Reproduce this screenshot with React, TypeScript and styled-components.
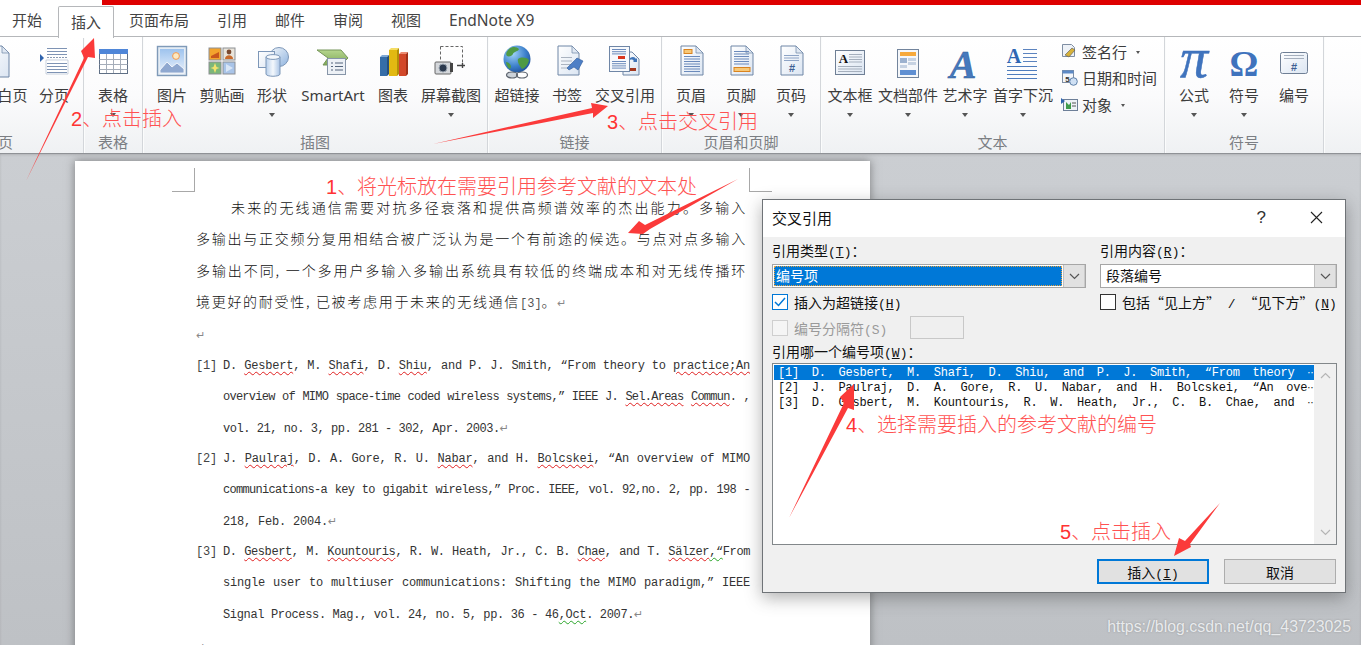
import React from "react";
import styled, { createGlobalStyle } from "styled-components";

const cjk = `"Noto Sans CJK SC", "Noto Sans", sans-serif`;
const mono = `"Liberation Mono", "Noto Sans CJK SC", monospace`;

const Global = createGlobalStyle`
  html, body { margin: 0; padding: 0; background: #c5c8cc; }
  body { font-family: ${cjk}; }
`;

const Screen = styled.div`
  position: relative;
  width: 1361px;
  height: 645px;
  overflow: hidden;
  display: flex;
  flex-direction: column;
  background: #fff;
`;
const HiddenDefs = styled.svg`
  position: absolute;
  width: 0;
  height: 0;
`;
const RedBar = styled.div`
  height: 5px;
  margin-left: 102px;
  background: #de0000;
  flex: none;
`;
const TabRow = styled.nav`
  display: flex;
  height: 31px;
  flex: none;
  position: relative;
  z-index: 2;
`;
const Tab = styled.div<{ $active?: boolean; $first?: boolean; $gap?: boolean }>`
  font-size: 15px;
  line-height: 30px;
  color: #444;
  padding: 0 14px;
  margin-left: ${(p) => (p.$gap ? "1px" : "0")};
  white-space: nowrap;
  ${(p) =>
    p.$first &&
    `padding: 0 15px 0 12px; width: 31px;`}
  ${(p) =>
    p.$active &&
    `height: 31px; margin-top: 1px; line-height: 29px; padding: 0 12px; background: #fff; border: 1px solid #b5b7ba; border-bottom: none; border-radius: 2px 2px 0 0; position: relative;`}
`;
const EnTab = styled(Tab)`
  font-family: "Noto Sans", sans-serif;
  font-size: 15.5px;
`;
const Ribbon = styled.div`
  display: flex;
  height: 116px;
  flex: none;
  border-top: 1px solid #b5b7ba;
  border-bottom: 1px solid #8f9296;
  box-sizing: content-box;
  margin-bottom: -1px;
  background: linear-gradient(#ffffff 0%, #fbfbfc 50%, #eff1f3 100%);
  position: relative;
  z-index: 1;
`;
const Group = styled.section<{ $w: number; $ml?: number; $pl: number }>`
  width: ${(p) => p.$w}px;
  margin-left: ${(p) => p.$ml ?? 0}px;
  flex: none;
  box-sizing: border-box;
  border-right: 1px solid #d3d6da;
  box-shadow: 1px 0 0 #fbfcfc;
  display: flex;
  flex-direction: column;
  padding-left: 0;
  & > div:first-child { padding-left: ${(p) => p.$pl}px; }
`;
const Items = styled.div`
  display: flex;
  height: 92px;
  flex: none;
`;
const GroupLabel = styled.div`
  height: 24px;
  line-height: 25px;
  font-size: 15px;
  color: #7b7e83;
  text-align: center;
`;
const Item = styled.div<{ $w: number }>`
  width: ${(p) => p.$w}px;
  flex: none;
  display: flex;
  flex-direction: column;
  align-items: center;
  padding-top: 5px;
`;
const IconBox = styled.svg`
  width: 40px;
  height: 40px;
  flex: none;
  display: block;
`;
const ItemLabel = styled.div<{ $en?: boolean }>`
  font-size: 15px;
  line-height: 26px;
  height: 26px;
  color: #3c3c3c;
  white-space: nowrap;
  ${(p) => p.$en && `font-family: "Noto Sans", sans-serif;`}
`;
const Caret = styled.span`
  width: 0;
  height: 0;
  margin-top: 5px;
  border-left: 3.5px solid transparent;
  border-right: 3.5px solid transparent;
  border-top: 4px solid #555;
`;
const Stack = styled.div`
  width: 105px;
  flex: none;
  display: flex;
  flex-direction: column;
  padding: 1px 0 0 5px;
  box-sizing: border-box;
`;
const StackRow = styled.div`
  display: flex;
  align-items: center;
  height: 26.5px;
  gap: 4px;
  font-size: 15px;
  color: #3c3c3c;
  white-space: nowrap;
`;
const SmallIcon = styled.svg`
  width: 17px;
  height: 17px;
  flex: none;
`;
const InlineCaret = styled(Caret)`
  margin: 2px 0 0 5px;
  border-left-width: 2.5px;
  border-right-width: 2.5px;
  border-top-width: 3px;
`;

const Workspace = styled.main`
  flex: 1;
  min-height: 0;
  padding: 8px 0 0 75px;
  background: linear-gradient(#cbced2, #bec1c5);
  box-shadow: inset 0 2px 3px -1px rgba(90, 90, 90, 0.45);
`;
const Sheet = styled.article`
  position: relative;
  width: 795px;
  height: 520px;
  box-sizing: border-box;
  padding: 31px 123px 0 121px;
  background: #fff;
  box-shadow: 0 0 9px rgba(70, 70, 70, 0.6);
  color: #222;
  &::before, &::after {
    content: "";
    position: absolute;
    top: 7px;
    width: 22px;
    height: 23px;
    border-bottom: 1px solid #a8a8a8;
  }
  &::before { left: 97px; border-right: 1px solid #a8a8a8; }
  &::after { left: 674px; border-left: 1px solid #a8a8a8; }
`;
const BodyLine = styled.div<{ $indent?: boolean; $last?: boolean; $tall?: boolean }>`
  font-size: 14px;
  font-weight: 300;
  line-height: 31.4px;
  height: ${(p) => (p.$tall ? 33.4 : 31.4)}px;
  letter-spacing: 1.7px;
  white-space: nowrap;
  color: #111;
  text-align: ${(p) => (p.$last ? "left" : "justify")};
  text-align-last: ${(p) => (p.$last ? "left" : "justify")};
  padding-left: ${(p) => (p.$indent ? 35 : 0)}px;
`;
const Mark = styled.span`
  font-family: "DejaVu Sans", sans-serif;
  font-size: 11px;
  color: #888;
  letter-spacing: 0;
`;
const BodyMono = styled.span`
  font-family: ${mono};
  font-size: 12px;
  letter-spacing: 0;
  color: #555;
`;
const RefBlock = styled.div`
  display: flex;
  margin-right: -3px;
`;
const RefMarker = styled.div`
  width: 27px;
  flex: none;
  font-family: ${mono};
  font-size: 12px;
  line-height: 31px;
  letter-spacing: -0.2px;
  color: #444;
`;
const RefLines = styled.div`
  flex: 1;
  min-width: 0;
`;
const RefLine = styled.div<{ $ls?: number; $last?: boolean }>`
  font-family: ${mono};
  font-size: 12px;
  line-height: 31px;
  height: 31px;
  letter-spacing: ${(p) => p.$ls ?? -0.2}px;
  white-space: nowrap;
  color: #333;
  text-align: justify;
  text-align-last: ${(p) => (p.$last ? "left" : "justify")};
`;
const Sq = styled.span<{ $green?: boolean }>`
  text-decoration: underline wavy ${(p) => (p.$green ? "#2aa52a" : "#e02020")} 1px;
  text-underline-offset: 2px;
`;

const Dialog = styled.section`
  position: absolute;
  left: 762px;
  top: 199px;
  width: 584px;
  height: 394px;
  box-sizing: border-box;
  border: 1px solid #6f7377;
  background: #f0f0f0;
  box-shadow: 0 5px 16px rgba(60, 60, 60, 0.4);
  z-index: 3;
  display: flex;
  flex-direction: column;
  color: #111;
`;
const TitleBar = styled.header`
  height: 37px;
  flex: none;
  background: #fff;
  display: flex;
  align-items: center;
  padding: 0 22px 2px 9px;
  font-size: 15px;
  box-sizing: border-box;
`;
const Title = styled.div`
  flex: 1;
`;
const Help = styled.div`
  font-family: "Liberation Sans", sans-serif;
  font-size: 17px;
  margin-right: 44px;
  color: #333;
`;
const CloseSvg = styled.svg`
  width: 13px;
  height: 13px;
`;
const DialogBody = styled.div`
  flex: 1;
  padding: 0 8px 0 9px;
  display: flex;
  flex-direction: column;
`;
const TopGrid = styled.div`
  display: grid;
  grid-template-columns: 314px 237px;
  column-gap: 14px;
`;
const FieldLabel = styled.div<{ $h?: number }>`
  height: ${(p) => p.$h ?? 27}px;
  line-height: ${(p) => p.$h ?? 27}px;
  font-size: 14px;
  white-space: nowrap;
`;
const Hot = styled.span`
  font-family: ${mono};
  font-size: 13px;
  & u { text-underline-offset: 1px; }
`;
const FullWidth = styled.span`
  font-feature-settings: "fwid";
`;
const Combo = styled.div`
  height: 24px;
  display: flex;
  box-sizing: border-box;
  border: 1px solid #a6a6a6;
  background: #fff;
  font-size: 14px;
`;
const ComboValue = styled.div<{ $focus?: boolean }>`
  flex: 1;
  line-height: 18px;
  margin: 1px;
  padding-left: ${(p) => (p.$focus ? 2 : 4)}px;
  box-sizing: border-box;
  ${(p) => p.$focus && `background: #0078d7; color: #fff; outline: 1px dotted #e8a23c; outline-offset: -1px;`}
`;
const ComboButton = styled.div`
  width: 21px;
  flex: none;
  background: #e1e1e1;
  border-left: 1px solid #c0c0c0;
  box-shadow: inset -1px 0 0 #c9c9c9;
  display: flex;
  align-items: center;
  justify-content: center;
`;
const Chevron = styled.svg`
  width: 11px;
  height: 7px;
`;
const CheckRow = styled.label<{ $h?: number; $disabled?: boolean }>`
  display: flex;
  align-items: center;
  gap: 6px;
  height: ${(p) => p.$h ?? 28}px;
  font-size: 14px;
  white-space: nowrap;
  color: ${(p) => (p.$disabled ? "#9a9a9a" : "#111")};
`;
const Box = styled.span<{ $tone: "on" | "off" | "dim" }>`
  width: 16px;
  height: 16px;
  box-sizing: border-box;
  flex: none;
  background: ${(p) => (p.$tone === "dim" ? "#f5f5f5" : "#fff")};
  border: 1px solid ${(p) => (p.$tone === "on" ? "#0078d7" : p.$tone === "off" ? "#333" : "#cfcfcf")};
  display: flex;
  align-items: center;
  justify-content: center;
`;
const SepRow = styled.div`
  display: flex;
  height: 23px;
  align-items: center;
`;
const SepInput = styled.div`
  width: 54px;
  height: 23px;
  box-sizing: border-box;
  border: 1px solid #c8c8c8;
  background: #efefef;
  margin-left: 23px;
`;
const ListBox = styled.div`
  height: 182px;
  flex: none;
  box-sizing: border-box;
  border: 1px solid #82878a;
  background: #fff;
  display: flex;
`;
const ListRows = styled.div`
  flex: 1;
  min-width: 0;
  padding-top: 1px;
`;
const ListRow = styled.div<{ $sel?: boolean }>`
  height: 15px;
  line-height: 16px;
  margin-left: 1px;
  padding-left: 4px;
  font-family: ${mono};
  font-size: 12px;
  letter-spacing: -0.2px;
  word-spacing: 5.7px;
  white-space: pre;
  overflow: hidden;
  background: ${(p) => (p.$sel ? "#0078d7" : "transparent")};
  color: ${(p) => (p.$sel ? "#fff" : "#111")};
`;
const Ell = styled.span`
  font-family: "DejaVu Sans", sans-serif;
  font-size: 10px;
  letter-spacing: 0;
`;
const Scroll = styled.div`
  width: 22px;
  flex: none;
  background: #f0f0f0;
  display: flex;
  flex-direction: column;
  justify-content: space-between;
  align-items: center;
  padding: 8px 0;
  box-sizing: border-box;
`;
const Footer = styled.div`
  display: flex;
  justify-content: flex-end;
  gap: 15px;
  padding: 14px 1px 0 0;
`;
const DlgButton = styled.button<{ $primary?: boolean }>`
  width: 112px;
  height: 25px;
  padding: 0;
  box-sizing: border-box;
  font-family: ${cjk};
  font-size: 14px;
  color: #111;
  background: #e1e1e1;
  border: ${(p) => (p.$primary ? "2px solid #0078d7" : "1px solid #adadad")};
`;

const Overlay = styled.svg`
  position: absolute;
  inset: 0;
  width: 1361px;
  height: 645px;
  z-index: 4;
  pointer-events: none;
`;
const Note = styled.div<{ $x: number; $y: number }>`
  position: absolute;
  left: ${(p) => p.$x}px;
  top: ${(p) => p.$y}px;
  z-index: 5;
  font-size: 20px;
  font-weight: 300;
  line-height: 28px;
  height: 28px;
  color: #ff5252;
  white-space: nowrap;
`;
const NoteNum = styled.span`
  font-family: "Liberation Sans", sans-serif;
  font-weight: 400;
  color: #ff3333;
`;
const Watermark = styled.div`
  position: absolute;
  right: 10px;
  bottom: 9px;
  z-index: 5;
  font-family: "Liberation Sans", sans-serif;
  font-size: 15.9px;
  color: rgba(240, 242, 244, 0.92);
  text-shadow: 0 0 2px rgba(120, 120, 120, 0.6);
`;

const pg = "#6f86a6";
const Page = ({ x = 10, y = 4, w = 22, h = 29 }: { x?: number; y?: number; w?: number; h?: number }) => (
  <path d={`M${x} ${y}h${w - 7}l7 7v${h - 7}h-${w}z`} fill="url(#pageFill)" stroke={pg} />
);
const Fold = ({ x = 10, y = 4, w = 22 }: { x?: number; y?: number; w?: number }) => (
  <path d={`M${x + w - 7} ${y}v7h7z`} fill="#dfe7f2" stroke={pg} strokeWidth=".7" />
);
const Lines = ({ x, y, w, n, d = 2.5, c = "#6b8abb" }: { x: number; y: number; w: number; n: number; d?: number; c?: string }) => (
  <g stroke={c}>
    {Array.from({ length: n }).map((_, i) => (
      <path key={i} d={`M${x} ${y + i * d + 0.5}h${w}`} />
    ))}
  </g>
);

const Icons: Record<string, React.ReactNode> = {
  blank: (<><Page x={0} y={4} w={24} h={31} /><Fold x={0} y={4} w={24} /></>),
  pagebreak: (
    <>
      <path d="M12 4h22v9h-22z" fill="#fff" />
      <Lines x={13} y={6} w={20} n={3} d={3} c="#7e93b4" />
      <path d="M13 15.5h21" stroke="#8a9ab3" strokeDasharray="2 1" />
      <path d="M12 18h22v14h-22z" fill="#fff" stroke="#a9b7cb" strokeWidth=".6" />
      <Lines x={13} y={21} w={20} n={4} d={3} c="#7e93b4" />
      <path d="M6 12l4 4-4 4z" fill="#2f63ad" />
    </>
  ),
  table: (
    <>
      <rect x="6.5" y="7.5" width="28" height="24" fill="#fff" stroke="#5f6f85" />
      <rect x="6" y="7" width="29" height="5" fill="#4f86d8" />
      <path d="M6.5 17.5h28M6.5 22.5h28M6.5 27.5h28M13.5 12v19M20.5 12v19M27.5 12v19" stroke="#a5adb9" />
    </>
  ),
  picture: (
    <>
      <rect x="5.5" y="4.5" width="29" height="29" fill="#e4ecf4" stroke="#7f9ab8" strokeWidth="1.4" />
      <rect x="8" y="7" width="24" height="24" fill="url(#sky)" />
      <circle cx="24" cy="14" r="3.4" fill="#fde9c2" stroke="#f09a52" />
      <path d="M8 28l7-8 5 5 5-4 7 6v4h-24z" fill="#8fa8d0" stroke="#fff" strokeWidth=".8" />
    </>
  ),
  clip: (
    <>
      <rect x="7" y="6" width="12" height="12" fill="#f4a32c" stroke="#8c8f94" />
      <path d="M9 14l8-4v6h-8z" fill="#c9561c" />
      <rect x="21" y="6" width="12" height="12" fill="#e9e4da" stroke="#8c8f94" />
      <circle cx="27" cy="10" r="2.4" fill="#7a4a30" />
      <path d="M23 17c0-5 8-5 8 0z" fill="#c86a2c" />
      <rect x="7" y="20" width="12" height="12" fill="#7cb77a" stroke="#8c8f94" />
      <path d="M13 21l1.5 4 3 1-3 1-1.5 4-1.5-4-3-1 3-1z" fill="#f3e36d" />
      <rect x="21" y="20" width="12" height="12" fill="#a9c4e8" stroke="#8c8f94" />
      <path d="M24 22l7 4-7 4z" fill="#d9e6f6" />
    </>
  ),
  shapes: (
    <>
      <circle cx="27" cy="15" r="9.5" fill="url(#ball)" stroke="#7d97b8" />
      <rect x="6.5" y="9.5" width="16" height="16" fill="url(#pageFill)" stroke="#7d97b8" />
      <path d="M14 15h14v17c0 3-14 3-14 0z" fill="url(#cyl)" stroke="#7d97b8" />
      <ellipse cx="21" cy="15" rx="7" ry="2.4" fill="#f4f8fc" stroke="#7d97b8" />
    </>
  ),
  smart: (
    <>
      <path d="M4 8h24l7 8-7 7h-18l5-7z" fill="url(#green)" stroke="#76965a" />
      <rect x="14.5" y="16.5" width="18" height="16" fill="#edf1f6" stroke="#8795a8" />
      <path d="M18 21h2M22 21h8M18 24.5h2M22 24.5h8M18 28h2M22 28h8" stroke="#55657c" />
    </>
  ),
  chart: (
    <>
      <path d="M7 15h7v19h-7z" fill="#356da8" /><path d="M7 15l2-2h7l-2 2z" fill="#7fa9d6" /><path d="M14 15l2-2v19l-2 2z" fill="#27507c" />
      <path d="M16 8h8v26h-8z" fill="#e2b912" /><path d="M16 8l2-2h8l-2 2z" fill="#f5dd63" /><path d="M24 8l2-2v26l-2 2z" fill="#b39008" />
      <path d="M26 12h7v22h-7z" fill="#d2482a" /><path d="M26 12l2-2h7l-2 2z" fill="#ec8c72" /><path d="M33 12l2-2v22l-2 2z" fill="#9f3119" />
    </>
  ),
  shot: (
    <>
      <path d="M9.5 4.5h22v19" fill="none" stroke="#666" strokeDasharray="3 2" />
      <path d="M9.5 4.5v14" fill="none" stroke="#666" strokeDasharray="3 2" />
      <path d="M26 23.5h5M31.5 21v5M29 23.5h5" stroke="#444" strokeWidth="1.4" />
      <rect x="4" y="20" width="16" height="12" rx="1" fill="#d4d7db" stroke="#666" />
      <circle cx="12" cy="26" r="4" fill="#2c3a4e" stroke="#9aa4b0" />
      <rect x="19" y="21" width="3" height="9" fill="#444" />
    </>
  ),
  globe: (
    <>
      <circle cx="20" cy="17" r="13.5" fill="url(#globe)" />
      <path d="M12 7c4-3 8-2 10 0-1 3-5 2-6 5-1 2-4 3-6 2-2-2 0-5 2-7zM21 17c3-2 8-2 11 1-1 5-4 8-7 9-2-3-5-6-4-10zM9 20c2 0 5 2 5 5l-1 2c-2-1-4-4-4-7z" fill="#4f9a44" />
      <ellipse cx="15" cy="33" rx="5.5" ry="3" fill="#ccd2d9" stroke="#5d646e" strokeWidth="1.2" />
      <ellipse cx="25" cy="33" rx="5.5" ry="3" fill="none" stroke="#5d646e" strokeWidth="1.2" />
    </>
  ),
  book: (
    <>
      <Page x={11} y={4} w={21} h={29} /><Fold x={11} y={4} w={21} />
      <Lines x={14} y={15} w={11} n={4} d={3.5} c="#aab3c0" />
      <path d="M20 26l10-10 6 3-5 9-4-3-5 3z" fill="#4d7fc6" stroke="#2d5a9a" strokeWidth=".6" />
    </>
  ),
  cross: (
    <>
      <Page x={18} y={10} w={16} h={23} />
      <rect x="24" y="26" width="7" height="3" fill="#a4381f" />
      <path d="M25 16c3-2 5-1 6 1l1-1v4h-4l1-1c-1-1-2-2-4-1z" fill="#3f74b8" />
      <rect x="4.5" y="4.5" width="20" height="25" fill="#f7f9fc" stroke={pg} />
      <Lines x={7} y={7} w={14} n={3} d={2.2} c="#6b8abb" />
      <rect x="13" y="14" width="7" height="3" fill="#d9371f" />
      <Lines x={7} y={19} w={14} n={4} d={2.2} c="#6b8abb" />
    </>
  ),
  header: (
    <>
      <Page /><Fold />
      <rect x="13" y="7.5" width="8" height="4" fill="#f7c877" stroke="#d9831f" />
      <Lines x={13} y={14} w={16} n={7} />
    </>
  ),
  footer: (
    <>
      <Page /><Fold />
      <Lines x={13} y={9} w={15} n={6} />
      <rect x="13" y="25.5" width="16" height="4" fill="#f7c877" stroke="#d9831f" />
    </>
  ),
  pagenum: (
    <>
      <Page /><Fold />
      <Lines x={13} y={13} w={15} n={3} d={2.5} c="#8ea4c6" />
      <text x="21" y="30" textAnchor="middle" fontFamily="Liberation Sans" fontWeight="700" fontSize="11" fill="#3d5f93">#</text>
    </>
  ),
  textbox: (
    <>
      <rect x="5.5" y="8.5" width="29" height="24" fill="url(#pageFill)" stroke="#6f7f95" />
      <text x="13.5" y="21" textAnchor="middle" fontFamily="Liberation Serif" fontWeight="700" fontSize="13" fill="#111">A</text>
      <Lines x={19} y={12} w={13} n={4} d={2.5} c="#a5afbd" />
      <Lines x={8} y={24} w={24} n={3} d={2.5} c="#a5afbd" />
    </>
  ),
  parts: (
    <>
      <rect x="9.5" y="7.5" width="21" height="28" fill="#f5f7fa" stroke="#72849c" />
      <rect x="12" y="10" width="16" height="4" fill="#f7a93b" />
      <rect x="12" y="16" width="7" height="5" fill="#9db2cf" />
      <rect x="20" y="16" width="8" height="3" fill="#c6d2e2" />
      <rect x="20" y="20" width="8" height="3" fill="#c6d2e2" />
      <rect x="12" y="23" width="7" height="3" fill="#c6d2e2" />
      <rect x="12" y="28" width="16" height="5" fill="#5f8fd2" />
    </>
  ),
  wordart: (
    <text x="18" y="36" textAnchor="middle" fontFamily="Liberation Serif" fontStyle="italic" fontWeight="700" fontSize="40" fill="#4679bd" stroke="#2f5a97" strokeWidth=".5">A</text>
  ),
  dropcap: (
    <>
      <text x="11" y="21" textAnchor="middle" fontFamily="Liberation Serif" fontWeight="700" fontSize="20" fill="#2f66b3">A</text>
      <Lines x={20} y={7} w={14} n={4} d={4} c="#5c84bf" />
      <Lines x={4} y={24} w={30} n={4} d={4} c="#4f7dbd" />
    </>
  ),
  pi: (
    <text x="20" y="35" textAnchor="middle" fontFamily="Liberation Serif" fontStyle="italic" fontSize="56" fill="#3f73bd" stroke="#3f73bd" strokeWidth=".5">π</text>
  ),
  omega: (
    <text x="20" y="34" textAnchor="middle" fontFamily="Liberation Serif" fontWeight="700" fontSize="36" fill="#3f73bd">Ω</text>
  ),
  number: (
    <>
      <rect x="6.5" y="10.5" width="27" height="21" rx="2" fill="url(#pageFill)" stroke="#6f7f95" />
      <Lines x={10} y={13} w={20} n={2} d={3} c="#a5afbd" />
      <text x="20" y="28.5" textAnchor="middle" fontFamily="Liberation Sans" fontWeight="700" fontSize="11" fill="#3d5f93">#</text>
    </>
  ),
};

type It = { label: string; w: number; icon: string; caret?: boolean; en?: boolean };
type Gr = { name: string; w: number; ml?: number; pl: number; items: It[]; stack?: boolean };

const groups: Gr[] = [
  { name: "分页", w: 171, ml: -87, pl: 67, items: [
    { label: "空白页", w: 50, icon: "blank" },
    { label: "分页", w: 48, icon: "pagebreak" },
  ] },
  { name: "表格", w: 59, pl: 0, items: [{ label: "表格", w: 58, icon: "table", caret: true }] },
  { name: "插图", w: 345, pl: 4, items: [
    { label: "图片", w: 50, icon: "picture" },
    { label: "剪贴画", w: 50, icon: "clip" },
    { label: "形状", w: 50, icon: "shapes", caret: true },
    { label: "SmartArt", w: 72, icon: "smart", en: true },
    { label: "图表", w: 48, icon: "chart" },
    { label: "屏幕截图", w: 68, icon: "shot", caret: true },
  ] },
  { name: "链接", w: 174, pl: 4, items: [
    { label: "超链接", w: 50, icon: "globe" },
    { label: "书签", w: 50, icon: "book" },
    { label: "交叉引用", w: 66, icon: "cross" },
  ] },
  { name: "页眉和页脚", w: 159, pl: 4, items: [
    { label: "页眉", w: 50, icon: "header", caret: true },
    { label: "页脚", w: 50, icon: "footer", caret: true },
    { label: "页码", w: 50, icon: "pagenum", caret: true },
  ] },
  { name: "文本", w: 344, pl: 3, stack: true, items: [
    { label: "文本框", w: 52, icon: "textbox", caret: true },
    { label: "文档部件", w: 64, icon: "parts", caret: true },
    { label: "艺术字", w: 50, icon: "wordart", caret: true },
    { label: "首字下沉", w: 66, icon: "dropcap", caret: true },
  ] },
  { name: "符号", w: 159, pl: 4, items: [
    { label: "公式", w: 50, icon: "pi", caret: true },
    { label: "符号", w: 50, icon: "omega", caret: true },
    { label: "编号", w: 50, icon: "number" },
  ] },
];

const ChevronIcon = ({ up, color = "#555" }: { up?: boolean; color?: string }) => (
  <Chevron viewBox="0 0 11 7">
    <path d={up ? "M1 6l4.5-4.5L10 6" : "M1 1l4.5 4.5L10 1"} fill="none" stroke={color} strokeWidth="1.2" />
  </Chevron>
);

const Ret = () => <Mark>↵</Mark>;

export default function App() {
  return (
    <Screen>
      <Global />
      <HiddenDefs aria-hidden="true">
        <defs>
          <linearGradient id="pageFill" x1="0" y1="0" x2="1" y2="1"><stop offset="0" stopColor="#ffffff" /><stop offset="1" stopColor="#dbe5f2" /></linearGradient>
          <linearGradient id="sky" x1="0" y1="0" x2="0" y2="1"><stop offset="0" stopColor="#9ec3ee" /><stop offset="1" stopColor="#e9f1fb" /></linearGradient>
          <linearGradient id="ball" x1="0" y1="0" x2="1" y2="1"><stop offset="0" stopColor="#f4f8fc" /><stop offset="1" stopColor="#8fb3de" /></linearGradient>
          <linearGradient id="cyl" x1="0" y1="0" x2="1" y2="0"><stop offset="0" stopColor="#b9d0ec" /><stop offset=".5" stopColor="#f4f8fc" /><stop offset="1" stopColor="#a9c4e6" /></linearGradient>
          <linearGradient id="green" x1="0" y1="0" x2="0" y2="1"><stop offset="0" stopColor="#b6d68d" /><stop offset="1" stopColor="#7fa858" /></linearGradient>
          <radialGradient id="globe" cx=".35" cy=".3" r=".8"><stop offset="0" stopColor="#9fd3f5" /><stop offset=".6" stopColor="#3c7fcb" /><stop offset="1" stopColor="#1c4c92" /></radialGradient>
        </defs>
      </HiddenDefs>

      <RedBar />
      <TabRow>
        <Tab $first>开始</Tab>
        <Tab $active>插入</Tab>
        <Tab $gap>页面布局</Tab>
        <Tab>引用</Tab>
        <Tab>邮件</Tab>
        <Tab>审阅</Tab>
        <Tab>视图</Tab>
        <EnTab>EndNote X9</EnTab>
      </TabRow>

      <Ribbon>
        {groups.map((g) => (
          <Group key={g.name} $w={g.w} $ml={g.ml} $pl={g.pl}>
            <Items>
              {g.items.map((it) => (
                <Item key={it.label} $w={it.w}>
                  <IconBox viewBox="0 0 40 40">{Icons[it.icon]}</IconBox>
                  <ItemLabel $en={it.en}>{it.label}</ItemLabel>
                  {it.caret && <Caret />}
                </Item>
              ))}
              {g.stack && (
                <Stack>
                  <StackRow>
                    <SmallIcon viewBox="0 0 17 17">
                      <path d="M1.5 1.5h9l3 3v9h-12z" fill="#eef2f7" stroke="#7f8ea3" />
                      <path d="M4 12l7-7 3 2-6 7z" fill="#d7b23a" stroke="#555" strokeWidth=".6" />
                    </SmallIcon>
                    签名行<InlineCaret />
                  </StackRow>
                  <StackRow>
                    <SmallIcon viewBox="0 0 17 17">
                      <rect x="1.5" y="1.5" width="11" height="12" fill="#f4f7fb" stroke="#7f8ea3" />
                      <rect x="1.5" y="1.5" width="11" height="3" fill="#5d8ac6" />
                      <text x="6.5" y="12.5" textAnchor="middle" fontFamily="Liberation Sans" fontWeight="700" fontSize="8" fill="#333">5</text>
                      <circle cx="12.5" cy="12.5" r="3.8" fill="#cfe0f4" stroke="#5d7fa8" />
                    </SmallIcon>
                    日期和时间
                  </StackRow>
                  <StackRow>
                    <SmallIcon viewBox="0 0 17 17">
                      <rect x="2.5" y="3.5" width="14" height="11" fill="#eef2f7" stroke="#6d7f98" />
                      <path d="M5 13V6l3 3 2-3v7z" fill="#3e9a4a" />
                      <path d="M0 2l4 3-4 3z" fill="#2f63ad" />
                      <path d="M11 7h4M11 10h4" stroke="#555" />
                    </SmallIcon>
                    对象<InlineCaret />
                  </StackRow>
                </Stack>
              )}
            </Items>
            <GroupLabel>{g.name}</GroupLabel>
          </Group>
        ))}
      </Ribbon>

      <Workspace>
        <Sheet>
          <BodyLine $indent>未来的无线通信需要对抗多径衰落和提供高频谱效率的杰出能力。多输入</BodyLine>
          <BodyLine>多输出与正交频分复用相结合被广泛认为是一个有前途的候选。与点对点多输入</BodyLine>
          <BodyLine>多输出不同, 一个多用户多输入多输出系统具有较低的终端成本和对无线传播环</BodyLine>
          <BodyLine $last>境更好的耐受性, 已被考虑用于未来的无线通信<BodyMono>[3]</BodyMono>。<Ret /></BodyLine>
          <BodyLine $last $tall><Ret /></BodyLine>
          <RefBlock>
            <RefMarker>[1]</RefMarker>
            <RefLines>
              <RefLine>D. <Sq>Gesbert</Sq>, M. <Sq>Shafi</Sq>, D. <Sq>Shiu</Sq>, and P. J. Smith, “From theory to <Sq>practice;An</Sq></RefLine>
              <RefLine $ls={-0.75}>overview of MIMO space-time coded wireless systems,” IEEE J. <Sq>Sel.Areas</Sq> <Sq>Commun</Sq>. ,</RefLine>
              <RefLine $last $ls={-0.45}>vol. 21, no. 3, pp. 281 - 302, Apr. 2003.<Ret /></RefLine>
            </RefLines>
          </RefBlock>
          <RefBlock>
            <RefMarker>[2]</RefMarker>
            <RefLines>
              <RefLine>J. <Sq>Paulraj</Sq>, D. A. Gore, R. U. <Sq>Nabar</Sq>, and H. <Sq>Bolcskei</Sq>, “An overview of MIMO</RefLine>
              <RefLine $ls={-0.7}>communications-a key to gigabit wireless,” Proc. IEEE, vol. 92,no. 2, pp. 198 -</RefLine>
              <RefLine $last>218, Feb. 2004.<Ret /></RefLine>
            </RefLines>
          </RefBlock>
          <RefBlock>
            <RefMarker>[3]</RefMarker>
            <RefLines>
              <RefLine $ls={-0.4}>D. <Sq>Gesbert</Sq>, M. <Sq>Kountouris</Sq>, R. W. Heath, Jr., C. B. <Sq>Chae</Sq>, and T. <Sq>Sälzer</Sq><Sq $green>,“</Sq>From</RefLine>
              <RefLine>single user to multiuser communications: Shifting the MIMO paradigm,” IEEE</RefLine>
              <RefLine $last $ls={-0.35}>Signal Process. Mag., vol. 24, no. 5, pp. 36 - 46<Sq $green>,Oct</Sq>. 2007.<Ret /></RefLine>
            </RefLines>
          </RefBlock>
          <BodyLine $last><Ret /></BodyLine>
        </Sheet>
      </Workspace>

      <Dialog>
        <TitleBar>
          <Title>交叉引用</Title>
          <Help>?</Help>
          <CloseSvg viewBox="0 0 13 13">
            <path d="M1 1l11 11M12 1L1 12" stroke="#222" strokeWidth="1.1" />
          </CloseSvg>
        </TitleBar>
        <DialogBody>
          <TopGrid>
            <div>
              <FieldLabel>引用类型<Hot>(<u>T</u>)</Hot>：</FieldLabel>
              <Combo>
                <ComboValue $focus>编号项</ComboValue>
                <ComboButton><ChevronIcon /></ComboButton>
              </Combo>
              <CheckRow>
                <Box $tone="on">
                  <svg width="12" height="10" viewBox="0 0 12 10"><path d="M1 5l3.5 3.5L11 1" fill="none" stroke="#0078d7" strokeWidth="1.5" /></svg>
                </Box>
                <span>插入为超链接<Hot>(<u>H</u>)</Hot></span>
              </CheckRow>
            </div>
            <div>
              <FieldLabel>引用内容<Hot>(<u>R</u>)</Hot>：</FieldLabel>
              <Combo>
                <ComboValue>段落编号</ComboValue>
                <ComboButton><ChevronIcon /></ComboButton>
              </Combo>
              <CheckRow>
                <Box $tone="off" />
                <span><FullWidth>包括“见上方”</FullWidth><Hot> / </Hot><FullWidth>“见下方”</FullWidth><Hot>(<u>N</u>)</Hot></span>
              </CheckRow>
            </div>
          </TopGrid>
          <SepRow>
            <CheckRow $h={23} $disabled>
              <Box $tone="dim" />
              <span>编号分隔符<Hot>(S)</Hot></span>
            </CheckRow>
            <SepInput />
          </SepRow>
          <FieldLabel $h={24}>引用哪一个编号项<Hot>(<u>W</u>)</Hot>：</FieldLabel>
          <ListBox>
            <ListRows>
              <ListRow $sel>{"[1] D. Gesbert, M. Shafi, D. Shiu, and P. J. Smith, “From theory "}<Ell>⋯</Ell></ListRow>
              <ListRow>{"[2] J. Paulraj, D. A. Gore, R. U. Nabar, and H. Bolcskei, “An ove"}<Ell>⋯</Ell></ListRow>
              <ListRow>{"[3] D. Gesbert, M. Kountouris, R. W. Heath, Jr., C. B. Chae, and "}<Ell>⋯</Ell></ListRow>
            </ListRows>
            <Scroll>
              <ChevronIcon up color="#b5b5b5" />
              <ChevronIcon color="#b5b5b5" />
            </Scroll>
          </ListBox>
          <Footer>
            <DlgButton $primary>插入<Hot>(<u>I</u>)</Hot></DlgButton>
            <DlgButton>取消</DlgButton>
          </Footer>
        </DialogBody>
      </Dialog>

      <Overlay viewBox="0 0 1361 645">
        <g fill="#fb3a3a">
          <polygon points="26,181 88,57 95,58 94,38 81,51 84,58" />
          <polygon points="433,144 592,108 591,103 608,106 593,118 593,113" />
          <polygon points="738,179 650,229 643,234 628,233 639,221 645,225" />
          <polygon points="789,518 848,408 854,410 854,384 840,397 844,403" />
          <polygon points="1220,503 1190,544 1191,547 1174,556 1179,538 1185,541" />
        </g>
      </Overlay>

      <Note $x={326} $y={172}><NoteNum>1</NoteNum>、将光标放在需要引用参考文献的文本处</Note>
      <Note $x={71} $y={104}><NoteNum>2</NoteNum>、点击插入</Note>
      <Note $x={607} $y={107}><NoteNum>3</NoteNum>、点击交叉引用</Note>
      <Note $x={846} $y={410}><NoteNum>4</NoteNum>、选择需要插入的参考文献的编号</Note>
      <Note $x={1060} $y={517}><NoteNum>5</NoteNum>、点击插入</Note>
      <Watermark>https://blog.csdn.net/qq_43723025</Watermark>
    </Screen>
  );
}
